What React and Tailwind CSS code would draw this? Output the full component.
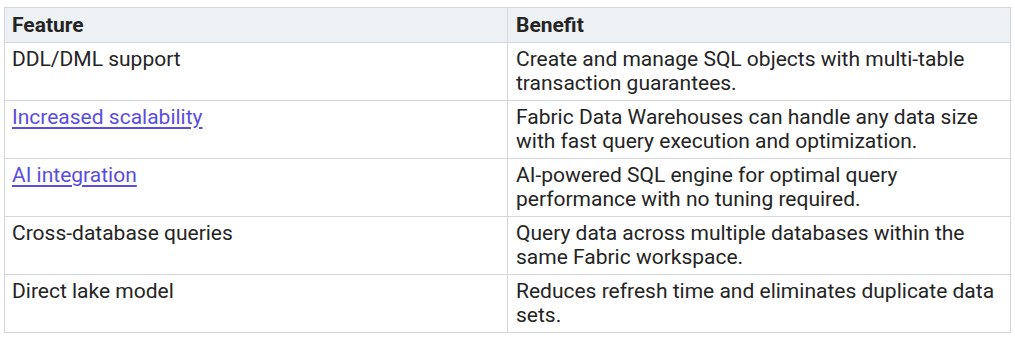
const rows = [
  { feature: 'DDL/DML support', benefit: 'Create and manage SQL objects with multi-table transaction guarantees.' },
  { feature: 'Increased scalability', link: true, benefit: 'Fabric Data Warehouses can handle any data size with fast query execution and optimization.' },
  { feature: 'AI integration', link: true, benefit: 'AI-powered SQL engine for optimal query performance with no tuning required.' },
  { feature: 'Cross-database queries', benefit: 'Query data across multiple databases within the same Fabric workspace.' },
  { feature: 'Direct lake model', benefit: 'Reduces refresh time and eliminates duplicate data sets.' },
];

export default function App() {
  return (
    <div className="bg-white px-[4px] pt-[7px] font-['Roboto',sans-serif] text-[21px] leading-[24px] text-[#242424]">
      <table className="w-[1007px] table-fixed border-collapse border border-[#d3d7dc]">
        <thead>
          <tr className="bg-[#eef1f4]">
            <th className="w-1/2 border border-[#d3d7dc] px-[7px] pb-[5px] pt-[5px] text-left font-bold">Feature</th>
            <th className="w-1/2 border border-[#d3d7dc] px-[8px] pb-[5px] pt-[5px] text-left font-bold">Benefit</th>
          </tr>
        </thead>
        <tbody>
          {rows.map((r) => (
            <tr key={r.feature}>
              <td className="h-[58px] border border-[#d3d7dc] px-[7px] pb-[5px] pt-[4px] align-top">
                {r.link ? (
                  <a href="#" className="text-[#5b4de0] underline underline-offset-[3px]">{r.feature}</a>
                ) : (
                  r.feature
                )}
              </td>
              <td className="h-[58px] border border-[#d3d7dc] px-[8px] pb-[5px] pt-[4px] align-top">{r.benefit}</td>
            </tr>
          ))}
        </tbody>
      </table>
    </div>
  );
}
